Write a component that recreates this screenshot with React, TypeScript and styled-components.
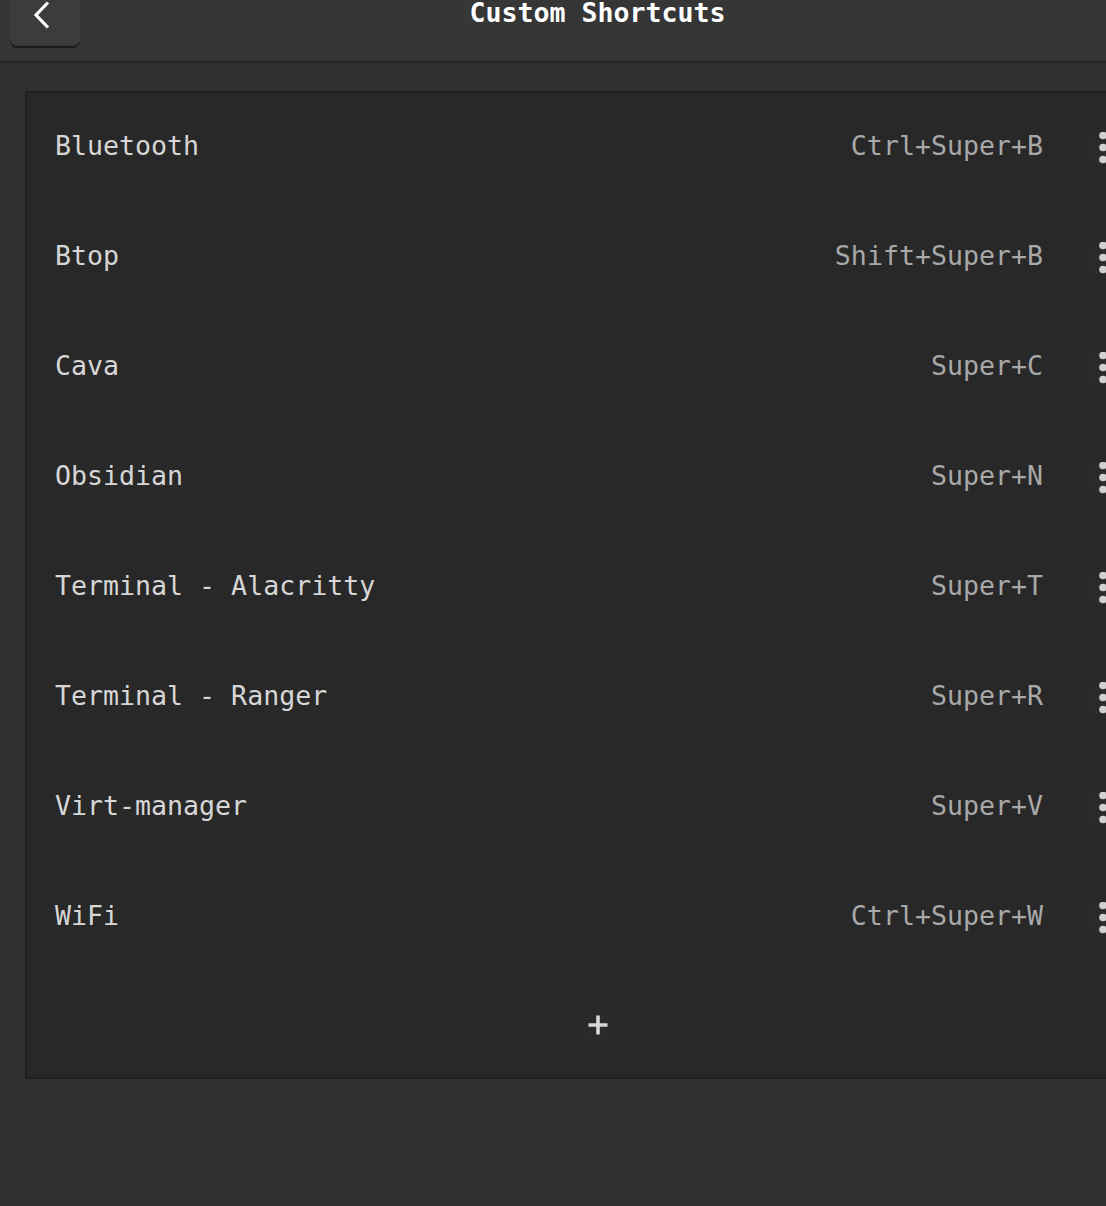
import React from "react";
import styled, { createGlobalStyle, css } from "styled-components";

const Global = createGlobalStyle`
  html, body {
    margin: 0;
    padding: 0;
    background: #303030;
    overflow: hidden;
  }
  body {
    font-family: "DejaVu Sans Mono", "Liberation Mono", monospace;
  }
`;

const Shell = styled.div`
  width: 1195px;
  min-height: 1206px;
  background: #303030;
  display: flex;
  flex-direction: column;
`;

const Header = styled.header`
  background: #363636;
  border-bottom: 2px solid #262626;
  display: grid;
  grid-template-columns: 1fr auto 1fr;
  align-items: start;
  padding: 0 10px;
  box-sizing: border-box;
  height: 63px;
`;

const BackButton = styled.button`
  justify-self: start;
  width: 70px;
  height: 56px;
  margin-top: -10px;
  background: #3c3c3c;
  border: none;
  border-radius: 7px;
  box-shadow: 0 2px 0 #1a1a1a, inset 0 -1px 0 #333;
  display: flex;
  align-items: flex-end;
  justify-content: flex-start;
  padding: 0 0 17px 23px;
  box-sizing: border-box;
  cursor: pointer;
`;

const Title = styled.h1`
  margin: -3px 0 0;
  font-family: "DejaVu Sans Mono", "Liberation Mono", monospace;
  font-size: 26.6px;
  font-weight: bold;
  color: #ffffff;
  line-height: 31px;
`;

const Content = styled.main`
  padding: 28px 25px 0;
`;

const Card = styled.section`
  background: #282828;
  border: 2px solid #1f1f1f;
  display: flex;
  flex-direction: column;
`;

const Row = styled.div`
  height: 110px;
  display: flex;
  align-items: center;
  padding: 0 49px 0 28px;
  box-sizing: border-box;
  border-bottom: 1px solid #232323;
`;

const rowText = css`
  font-size: 26.6px;
  line-height: 31px;
  margin-bottom: 4px;
`;

const Name = styled.span`
  ${rowText};
  flex: 1;
  color: #d6d6d6;
`;

const Keys = styled.span`
  ${rowText};
  color: #a8a8a8;
  margin-right: 44px;
`;

const IconButton = styled.button`
  width: 32px;
  height: 32px;
  padding: 0;
  border: none;
  background: #2a2a2a;
  border-radius: 2px;
  display: flex;
  align-items: center;
  justify-content: center;
  cursor: pointer;
`;

const AddRow = styled.div`
  height: 104px;
  display: flex;
  align-items: center;
  justify-content: center;
`;

const shortcuts: [string, string][] = [
  ["Bluetooth", "Ctrl+Super+B"],
  ["Btop", "Shift+Super+B"],
  ["Cava", "Super+C"],
  ["Obsidian", "Super+N"],
  ["Terminal - Alacritty", "Super+T"],
  ["Terminal - Ranger", "Super+R"],
  ["Virt-manager", "Super+V"],
  ["WiFi", "Ctrl+Super+W"],
];

const Kebab = () => (
  <svg width="32" height="32" viewBox="0 0 32 32">
    <circle cx="16" cy="3.5" r="3.8" fill="#d0d0d0" />
    <circle cx="16" cy="15.5" r="3.8" fill="#d0d0d0" />
    <circle cx="16" cy="27.5" r="3.8" fill="#d0d0d0" />
  </svg>
);

const Plus = () => (
  <svg width="22" height="22" viewBox="0 0 22 22">
    <path d="M11 1.5 V20.5 M1.5 11 H20.5" stroke="#d6d6d6" strokeWidth="3.6" />
  </svg>
);

const Chevron = () => (
  <svg width="20" height="28" viewBox="0 0 20 28">
    <path d="M15 1.5 L3 14 L15 26.5" stroke="#ffffff" strokeWidth="3.2" fill="none" />
  </svg>
);

export default function App() {
  return (
    <>
      <Global />
      <Shell>
        <Header>
          <BackButton aria-label="Back">
            <Chevron />
          </BackButton>
          <Title>Custom Shortcuts</Title>
          <span />
        </Header>
        <Content>
          <Card>
            {shortcuts.map(([name, keys]) => (
              <Row key={name}>
                <Name>{name}</Name>
                <Keys>{keys}</Keys>
                <IconButton aria-label="More">
                  <Kebab />
                </IconButton>
              </Row>
            ))}
            <AddRow>
              <IconButton aria-label="Add">
                <Plus />
              </IconButton>
            </AddRow>
          </Card>
        </Content>
      </Shell>
    </>
  );
}
